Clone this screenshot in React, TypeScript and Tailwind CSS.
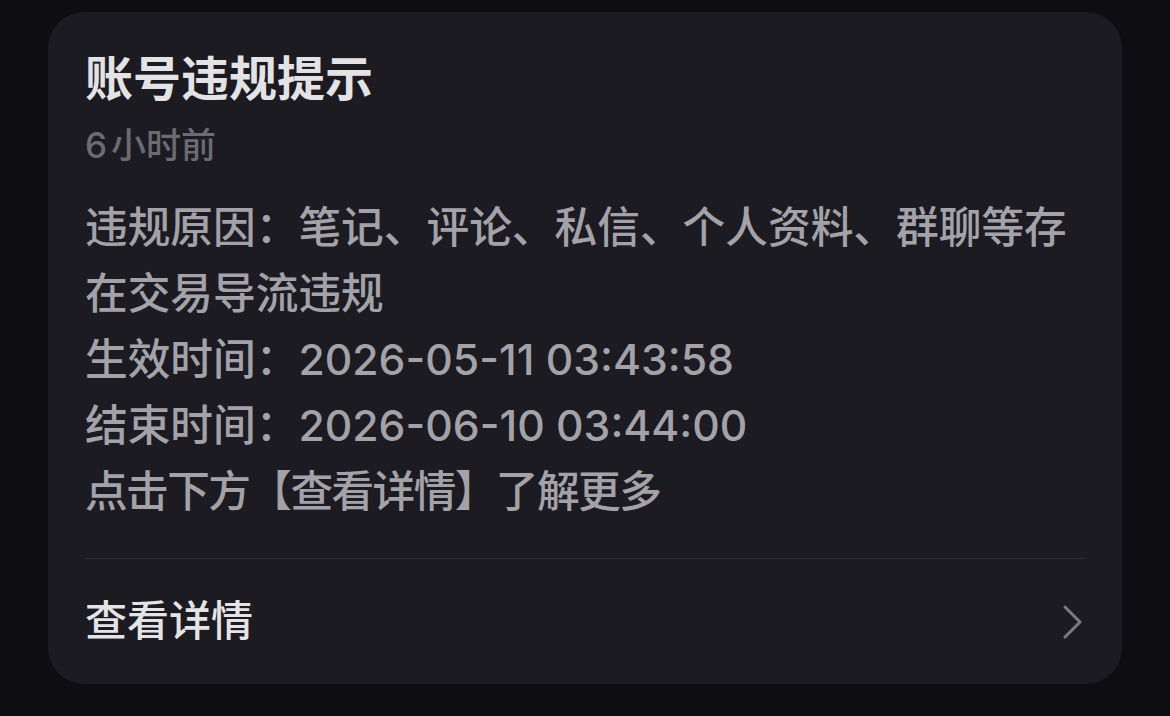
const lines = [
  '违规原因：笔记、评论、私信、个人资料、群聊等存在交易导流违规',
  '生效时间：2026-05-11 03:43:58',
  '结束时间：2026-06-10 03:44:00',
];

export default function App() {
  return (
    <div
      className="w-[1170px] h-[716px] bg-[#0e0d12] pt-[12px] px-[48px]"
      style={{ fontFamily: 'Inter, "Noto Sans CJK SC", sans-serif' }}
    >
      <div className="bg-[#1c1b21] rounded-[36px] pt-[37px] pl-[37px] pr-[36px]">
        <h1 className="text-[48px] leading-[60px] font-bold text-[#e3e3e5]">账号违规提示</h1>
        <p className="mt-[12px] text-[35px] leading-[48px] font-medium text-[#6c6b71]">
          6<span className="ml-[4px]">小时前</span>
        </p>
        <div className="mt-[26px] text-[42.7px] leading-[66px] font-medium text-[#a3a2a8]">
          {lines.map((l) => (
            <p key={l}>{l}</p>
          ))}
          <p className="tracking-[-1.6px]">点击下方【查看详情】了解更多</p>
        </div>
        <div className="mt-[33px] h-[1px] bg-[#2f2e34]" />
        <div className="h-[125px] flex items-center justify-between pb-[2px]">
          <span className="text-[42px] font-medium text-[#e4e4e6]">查看详情</span>
          <svg width="24" height="36" viewBox="0 0 24 36" className="mr-[1px] mt-[2px]" fill="none">
            <path d="M4 3 L19 18 L4 33" stroke="#7b7a80" strokeWidth="3" strokeLinecap="round" strokeLinejoin="round" />
          </svg>
        </div>
      </div>
    </div>
  );
}
